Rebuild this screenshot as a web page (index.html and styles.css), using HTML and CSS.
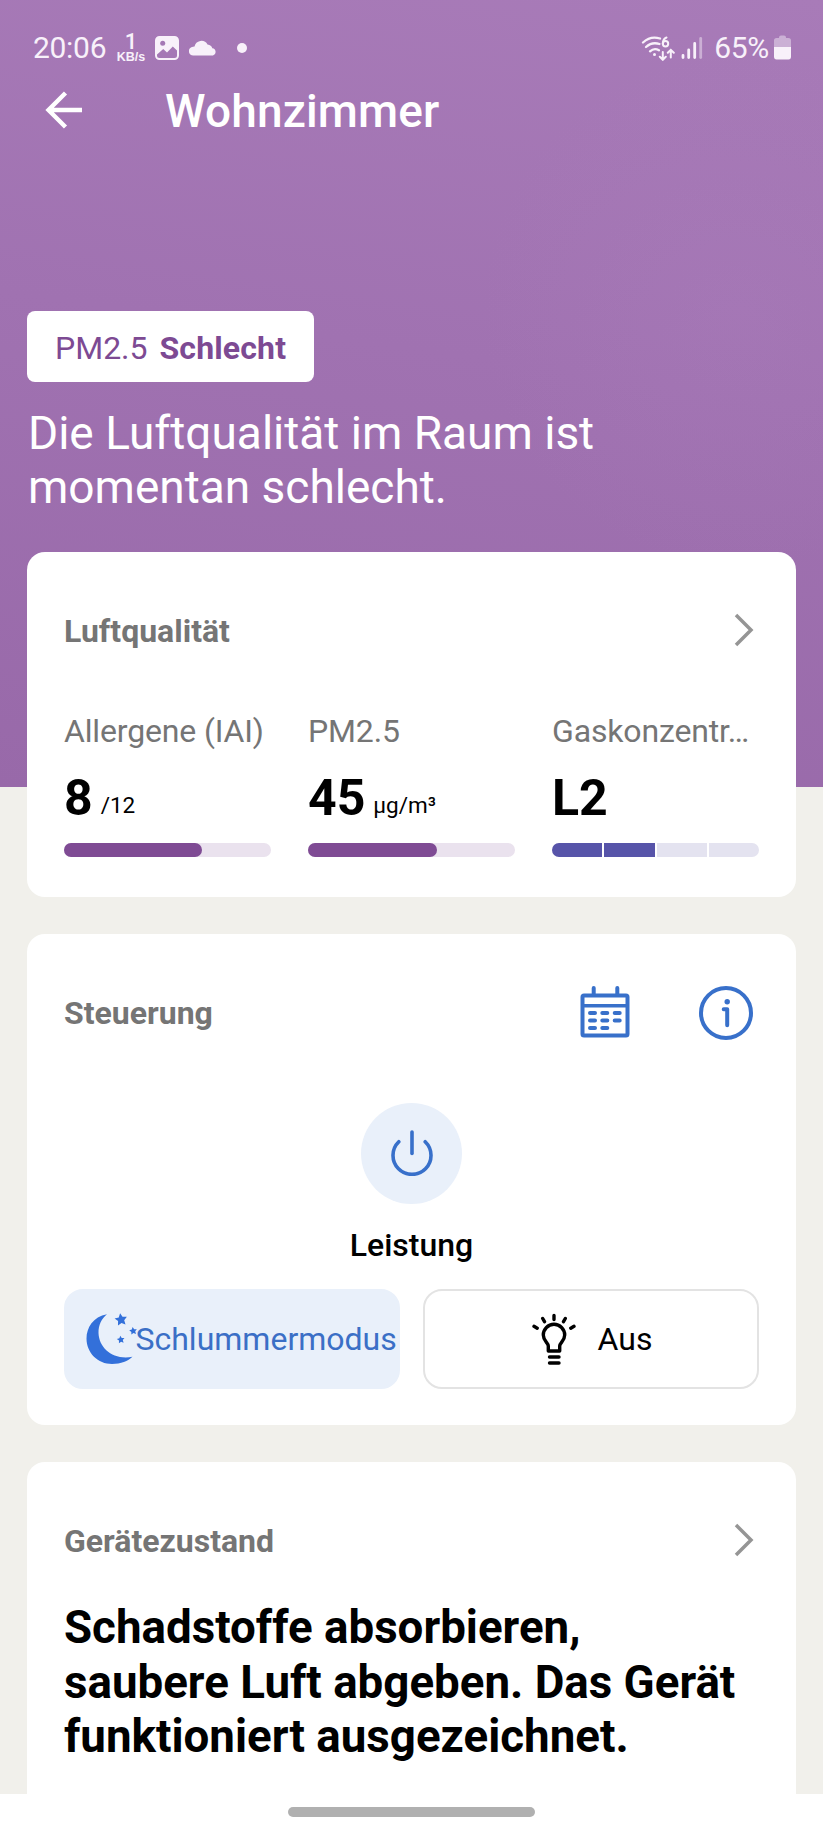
FILE: index.html
```html
<!DOCTYPE html>
<html lang="de">
<head>
    <meta charset="UTF-8">
    <meta name="viewport" content="width=device-width, initial-scale=1.0">
    <title>Wohnzimmer</title>
    <link rel="stylesheet" href="styles.css">
</head>
<body>
    <div class="status-bar">
        <span class="clock">20:06</span>
        <div class="net-speed"><span class="net-value">1</span><span class="net-unit">KB/s</span></div>
        <svg class="icon-image" width="24" height="24" viewBox="0 0 24 24">
            <rect x="1" y="1" width="22" height="22" rx="3.5" fill="none" stroke="currentColor" stroke-width="2"/>
            <path d="M2 2H22V14.5L17.8 10.4L12 16.4L8.200 13L2 18.500Z" fill="currentColor"/>
            <circle cx="7.700" cy="7.300" r="2.500" fill="#a478b5"/>
        </svg>
        <svg class="icon-cloud" width="28" height="16" viewBox="0 0 28 16">
            <path d="M4.500 15.500A4.400 4.400 0 0 1 4 6.700Q5 6.500 5.500 6.500A7 7 0 0 1 18.500 4.500Q22.500 5 23.300 8.300A3.700 3.700 0 0 1 24 15.500Z" fill="currentColor"/>
        </svg>
        <span class="dot"></span>
        <div class="status-right">
            <svg width="34" height="26" viewBox="0 0 34 26" fill="none" stroke="currentColor" stroke-width="2.300" stroke-linecap="round">
                <path d="M2 7.500Q9.500 0.500 19 3.500"/>
                <path d="M5 12Q11 6.500 18.500 9"/>
                <path d="M9 16.300Q13 12.600 18 15.200"/>
                <circle cx="13.500" cy="19.500" r="1.500" fill="currentColor" stroke="none"/>
                <path d="M25.500 2.500Q22 4 21.800 8.500" stroke-width="2"/>
                <circle cx="24.500" cy="8.700" r="2.700" stroke-width="2"/>
                <path d="M21.800 17V24.500M18.800 21.800L21.800 24.800L24.800 21.800M29.800 22.500V15M26.800 17.800L29.800 14.800L32.800 17.800" stroke-width="2"/>
            </svg>
            <svg class="icon-signal" width="22" height="24" viewBox="0 0 22 24" stroke="currentColor" stroke-width="2.800" stroke-linecap="round">
                <path d="M2 19.500V21.500M7.700 14V21.500M13.700 7.500V21.500"/>
                <path d="M19.700 2.500V21.500" opacity=".45"/>
            </svg>
            <span class="battery-text">65%</span>
            <svg class="icon-battery" width="17" height="25" viewBox="0 0 17 25" fill="currentColor">
                <path d="M5 2.500Q5 .5 7 .5H10Q12 .5 12 2.500V3H14.500Q17 3 17 5.500V12H0V5.500Q0 3 2.500 3H5Z" opacity=".45"/>
                <path d="M0 12H17V21.500Q17 24.500 14.500 24.500H2.500Q0 24.500 0 21.500Z"/>
            </svg>
        </div>
    </div>

    <header class="header">
        <svg class="back" width="38" height="38" viewBox="0 0 38 38" fill="none" stroke="currentColor" stroke-width="4.400">
            <path d="M20.500 2L3.500 19L20.500 36M3.500 19H37"/>
        </svg>
        <h1>Wohnzimmer</h1>
    </header>

    <section class="summary">
        <div class="badge">PM2.5 <strong>Schlecht</strong></div>
        <p class="summary-text">Die Luftqualität im Raum ist momentan schlecht.</p>
    </section>

    <main class="cards">
        <section class="card air-card">
            <div class="card-head">
                <h2>Luftqualität</h2>
                <svg class="chevron" width="20" height="34" viewBox="0 0 20 34"><path d="M2 2L17 17L2 32"/></svg>
            </div>
            <div class="metrics">
                <div class="metric">
                    <div class="metric-label">Allergene (IAI)</div>
                    <div class="metric-value">8 <small>/12</small></div>
                    <div class="bar"><div class="bar-fill" style="width: 66.67%"></div></div>
                </div>
                <div class="metric">
                    <div class="metric-label">PM2.5</div>
                    <div class="metric-value">45 <small>µg/m³</small></div>
                    <div class="bar"><div class="bar-fill" style="width: 62.5%"></div></div>
                </div>
                <div class="metric">
                    <div class="metric-label">Gaskonzentr…</div>
                    <div class="metric-value">L2</div>
                    <div class="bar-steps">
                        <span class="step on"></span>
                        <span class="step on"></span>
                        <span class="step"></span>
                        <span class="step"></span>
                    </div>
                </div>
            </div>
        </section>

        <section class="card control-card">
            <div class="card-head">
                <h2>Steuerung</h2>
                <div class="head-icons">
                    <svg width="50" height="54" viewBox="0 0 50 54" fill="none" stroke="currentColor" stroke-width="4" stroke-linecap="round">
                        <rect x="2.500" y="9.500" width="45" height="40" rx="1.500"/>
                        <path d="M3 19.800H47" stroke-width="3.500"/>
                        <path d="M13.700 2V8M37.300 2V8"/>
                        <path d="M10 27H15M22.300 27H27.300M34.700 27H39.700M10 34.500H15M22.300 34.500H27.300M34.700 34.500H39.700M10 42H15M22.300 42H27.300"/>
                    </svg>
                    <svg width="54" height="54" viewBox="0 0 54 54" fill="none" stroke="currentColor" stroke-width="4" stroke-linecap="round" stroke-linejoin="round">
                        <circle cx="27" cy="27" r="25"/>
                        <path d="M24.700 23.200H28.200V39.200"/>
                        <circle cx="28.200" cy="15.700" r="2.700" fill="currentColor" stroke="none"/>
                    </svg>
                </div>
            </div>
            <div class="power">
                <button class="power-btn">
                    <svg width="42" height="46" viewBox="0 0 42 46" fill="none" stroke="currentColor" stroke-width="3.600" stroke-linecap="round">
                        <path d="M21 2V23.500"/>
                        <path d="M7.800 11.700A19 19 0 1 0 34.200 11.700"/>
                    </svg>
                </button>
                <div class="power-label">Leistung</div>
            </div>
            <div class="modes">
                <button class="mode active">
                    <svg width="52" height="52" viewBox="0 0 52 52" fill="currentColor">
                        <defs>
                            <path id="star" d="M0-6.500L1.900-2.600L6.200-2L3.100 1L3.800 5.300L0 3.300L-3.800 5.300L-3.100 1L-6.200-2L-1.900-2.600Z"/>
                        </defs>
                        <path d="M21 1.200C7 3.500 0.500 15 0.500 25.500C0.500 40 12 51 26 51C35 51 42 48 46.500 43.800C27 47.500 13 35 12.500 20C12.400 12 15.500 5.500 21 1.200Z"/>
                        <use href="#star" transform="translate(35 6.700) rotate(-8)"/>
                        <use href="#star" transform="translate(47.200 18) rotate(-8) scale(.62)"/>
                        <use href="#star" transform="translate(34.800 26.700) rotate(-8) scale(.62)"/>
                    </svg>
                    <span>Schlummermodus</span>
                </button>
                <button class="mode">
                    <svg width="44" height="52" viewBox="0 0 44 52" fill="none" stroke="currentColor" stroke-width="3.400" stroke-linecap="round" stroke-linejoin="round">
                        <path d="M16.300 38V33C16.300 30 11.300 28 11.300 22A10.700 10.700 0 0 1 32.700 22C32.700 28 27.700 30 27.700 33V38Z"/>
                        <path d="M17.500 44H27M17.500 50H27"/>
                        <path d="M22 2.500V6.500M10.700 5.500L12.500 8.700M33.300 5.500L31.500 8.700M2 13.300L5.200 15.200M42 13.300L38.800 15.200"/>
                    </svg>
                    <span>Aus</span>
                </button>
            </div>
        </section>

        <section class="card device-card">
            <div class="card-head">
                <h2>Gerätezustand</h2>
                <svg class="chevron" width="20" height="34" viewBox="0 0 20 34"><path d="M2 2L17 17L2 32"/></svg>
            </div>
            <p class="device-text">Schadstoffe absorbieren,<br>saubere Luft abgeben. Das Gerät funktioniert ausgezeichnet.</p>
        </section>
    </main>

    <footer class="nav-bar"><span class="handle"></span></footer>
</body>
</html>
```
FILE: styles.css
```css
* {
    box-sizing: border-box;
}
body {
    margin: 0;
    font-family: Roboto, sans-serif;
    font-size: 32px;
    line-height: 40px;
    color: #000;
    background:
        radial-gradient(circle at 740px 310px, rgba(173, 128, 190, 0.25), rgba(173, 128, 190, 0) 260px) no-repeat 0 0 / 100% 787px,
        linear-gradient(188deg, #a87bb8 0%, #a072b1 45%, #9869a9 100%) no-repeat 0 0 / 100% 787px
        #f1f0eb;
}
h1, h2, p {
    margin: 0;
}
button {
    font: inherit;
    border: none;
    padding: 0;
}
svg {
    flex: none;
    display: block;
}

/* status bar */
.status-bar {
    display: flex;
    align-items: center;
    height: 82px;
    padding: 13px 32px 0 33px;
    color: #f8f1fa;
    font-size: 30px;
}
.clock {
    width: 83px;
    letter-spacing: -0.3px;
}
.net-speed {
    display: flex;
    flex-direction: column;
    align-items: center;
    width: 30px;
}
.net-value {
    font-size: 22px;
    line-height: 18px;
    font-weight: 500;
}
.net-unit {
    font-family: "Liberation Sans", Arial, sans-serif;
    font-size: 12.5px;
    line-height: 12px;
    font-weight: bold;
}
.icon-image {
    margin-left: 9px;
}
.icon-cloud {
    margin-left: 10px;
}
.dot {
    width: 10px;
    height: 10px;
    margin-left: 20px;
    border-radius: 50%;
    background: currentColor;
}
.status-right {
    display: flex;
    align-items: center;
    margin-left: auto;
}
.icon-signal {
    margin-left: 6px;
}
.battery-text {
    margin-left: 11px;
    letter-spacing: -0.3px;
}
.icon-battery {
    margin-left: 5px;
}

/* header */
.header {
    display: flex;
    align-items: center;
    height: 60px;
    padding-left: 45px;
    color: #fff;
}
.header h1 {
    margin: -2px 0 0 82px;
    font-size: 46px;
    line-height: 60px;
    font-weight: 500;
    letter-spacing: 0.15px;
}
.back {
    margin-top: -4px;
}
.summary {
    padding: 169px 27px 0;
    color: #fff;
}
.badge {
    width: 287px;
    height: 71px;
    padding: 17px 0 0 28px;
    border-radius: 8px;
    background: #fff;
    color: #7d4a93;
}
.badge strong {
    margin-left: 4px;
    letter-spacing: 0.15px;
}
.summary-text {
    width: 620px;
    margin-top: 24px;
    padding-left: 1px;
    font-size: 46px;
    line-height: 54.3px;
}

/* cards */
.cards {
    display: flex;
    flex-direction: column;
    gap: 37px;
    padding: 37.4px 27.4px 0;
}
.card {
    padding: 59px 36.6px 0;
    border-radius: 18px;
    background: #fff;
}
.card-head {
    display: flex;
    align-items: center;
    justify-content: space-between;
    height: 40px;
}
.card-head h2 {
    font-size: 32px;
    line-height: 40px;
    font-weight: 700;
    color: #757575;
}
.chevron {
    margin: -2px 5px 0 0;
    fill: none;
    stroke: #959595;
    stroke-width: 3.5;
}

.air-card {
    height: 345px;
}
.metrics {
    display: grid;
    grid-template-columns: repeat(3, 1fr);
    gap: 37px;
    margin-top: 60px;
}
.metric {
    min-width: 0;
}
.metric-label {
    color: #757575;
    white-space: nowrap;
    letter-spacing: -0.15px;
}
.metric-value {
    display: flex;
    align-items: flex-end;
    gap: 8px;
    height: 60px;
    margin: 17px 0 15px;
    font-size: 50px;
    line-height: 60px;
    font-weight: 700;
}
.metric-value small {
    padding-bottom: 11px;
    font-size: 22.5px;
    line-height: 1;
    font-weight: 400;
}
.bar {
    height: 14px;
    border-radius: 7px;
    background: #eae2ee;
}
.bar-fill {
    height: 100%;
    border-radius: 7px;
    background: #7f4b94;
}
.bar-steps {
    display: flex;
    gap: 2px;
    height: 14px;
    border-radius: 7px;
    overflow: hidden;
}
.step {
    flex: 1;
    background: #e4e3f0;
}
.step.on {
    background: #5754a9;
}

.control-card {
    height: 491px;
}
.head-icons {
    display: flex;
    align-items: center;
    gap: 69px;
    margin-right: 6px;
    color: #3870ca;
}
.power {
    display: flex;
    flex-direction: column;
    align-items: center;
    margin-top: 70px;
}
.power-btn {
    display: flex;
    align-items: center;
    justify-content: center;
    width: 101px;
    height: 101px;
    border-radius: 50%;
    background: #e9f0fa;
    color: #3870ca;
}
.power-label {
    margin-top: 21px;
    font-weight: 500;
}
.modes {
    display: grid;
    grid-template-columns: 1fr 1fr;
    gap: 23px;
    margin-top: 24px;
}
.mode {
    display: flex;
    align-items: center;
    justify-content: center;
    gap: 22px;
    height: 100px;
    padding-left: 2px;
    border: 2px solid #e3e3e3;
    border-radius: 19px;
    background: #fff;
    color: #000;
}
.mode.active {
    justify-content: flex-start;
    gap: 0;
    padding-left: 20px;
    border-color: #e9f0fa;
    background: #e9f0fa;
    color: #3370da;
}
.mode.active span {
    margin-left: -2.5px;
    color: #3b6fc6;
}

.device-card {
    height: 332px;
    border-radius: 18px 18px 0 0;
}
.device-text {
    margin-top: 40.5px;
    font-size: 45.7px;
    line-height: 54.3px;
    font-weight: 700;
}

.nav-bar {
    display: flex;
    justify-content: center;
    height: 33.6px;
    padding-top: 13px;
    background: #fff;
}
.handle {
    width: 247px;
    height: 10px;
    border-radius: 5px;
    background: #b0b0b0;
}
```
